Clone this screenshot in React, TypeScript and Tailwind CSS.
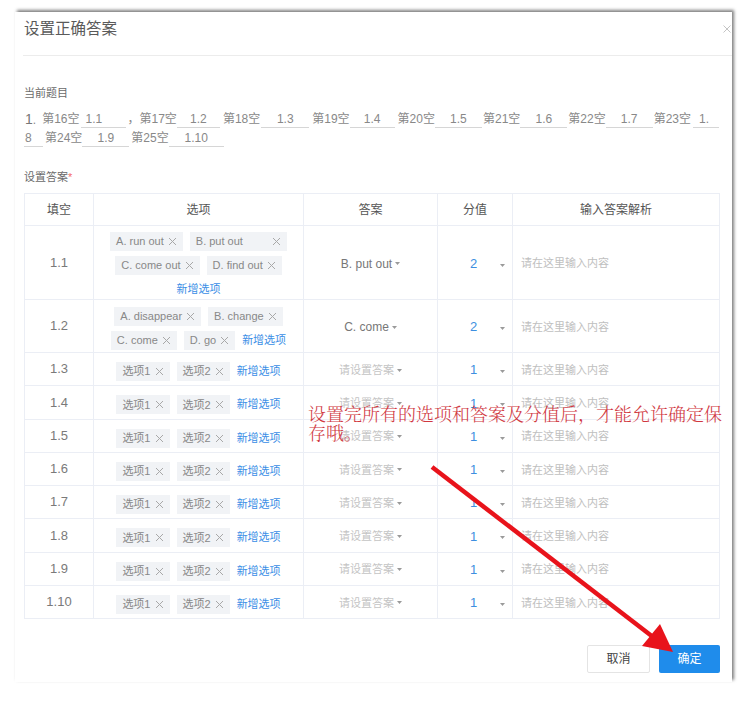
import React from "react";

function XIcon({ className }: { className?: string }) {
  return (
    <svg width="9" height="9" viewBox="0 0 9 9" className={className}>
      <path d="M1 1L8 8M8 1L1 8" stroke="#a8a8a8" strokeWidth="1" fill="none" />
    </svg>
  );
}

function Caret({ className }: { className?: string }) {
  return (
    <svg width="5" height="3" viewBox="0 0 5 3" className={className}>
      <path d="M0 0H5L2.5 3Z" fill="#9a9a9a" />
    </svg>
  );
}

function Tag({ label, wide }: { label: string; wide?: boolean }) {
  return (
    <span className="inline-flex items-center h-[19px] px-[6px] bg-[#f1f3f6] text-[11px] text-[#888] whitespace-nowrap">
      {label}
      <XIcon className={wide ? "ml-[29px]" : "ml-[4px]"} />
    </span>
  );
}

function AddBtn() {
  return <span className="h-[19px] leading-[19px] text-[11px] text-[#3a8ee6] whitespace-nowrap">新增选项</span>;
}

type Row = {
  n: string;
  h: string;
  tags: { label: string; wide?: boolean }[];
  answer: string;
  placeholder: boolean;
  score: string;
};

const rows: Row[] = [
  {
    n: "1.1",
    h: "h-[74px]",
    tags: [{ label: "A. run out" }, { label: "B. put out", wide: true }, { label: "C. come out" }, { label: "D. find out" }],
    answer: "B. put out",
    placeholder: false,
    score: "2",
  },
  {
    n: "1.2",
    h: "h-[53px]",
    tags: [{ label: "A. disappear" }, { label: "B. change" }, { label: "C. come" }, { label: "D. go" }],
    answer: "C. come",
    placeholder: false,
    score: "2",
  },
  ...["1.3", "1.4", "1.5", "1.6", "1.7", "1.8", "1.9", "1.10"].map((n) => ({
    n,
    h: "h-[33.25px]",
    tags: [{ label: "选项1" }, { label: "选项2" }],
    answer: "请设置答案",
    placeholder: true,
    score: "1",
  })),
];

function Label({ t, className }: { t: string; className?: string }) {
  return <span className={"whitespace-nowrap " + (className ?? "")}>{t}</span>;
}

function Blank({ t, className }: { t: string; className: string }) {
  return (
    <span className={"inline-block h-[17px] leading-[16px] border-b border-[#d6d6d6] whitespace-nowrap " + className}>{t}</span>
  );
}

export default function App() {
  return (
    <div className="relative w-[751px] h-[707px] bg-white overflow-hidden font-['Liberation_Sans','Noto_Sans_CJK_SC',sans-serif]">
      {/* dialog */}
      <div className="relative ml-[15px] mt-[12px] w-[717px] h-[670px] bg-white shadow-[2px_-2px_3px_rgba(0,0,0,0.5)] flex flex-col pl-[9px] pr-[12px]">
        <svg width="8" height="8" viewBox="0 0 8 8" className="absolute right-[1px] top-[13px]">
          <path d="M0.5 0.5L7.5 7.5M7.5 0.5L0.5 7.5" stroke="#c4c4c4" strokeWidth="1" />
        </svg>
        <div className="h-[44px] -ml-[1px] -mr-[12px] border-b border-[#ececec] pt-[6px] pl-[1px]">
          <div className="text-[15.5px] leading-[22px] text-[#5a5a5a]">设置正确答案</div>
        </div>

        <div className="mt-[29px] h-[17px] leading-[17px] text-[11px] text-[#6a6a6a]">当前题目</div>

        <div className="mt-[9px] text-[12px] text-[#888]">
          <div className="flex items-start h-[19px] leading-[16px] whitespace-nowrap">
            <span className="ml-[1px]">
              <span className="text-[14px] leading-[16px] text-[#777]">1</span>.
            </span>
            <Label t="第16空" className="ml-[6px]" />
            <Blank t="1.1" className="ml-[1px] w-[45px] pl-[5px]" />
            <span className="ml-[2px]">，</span>
            <Label t="第17空" />
            <Blank t="1.2" className="w-[43px] text-center" />
            <Label t="第18空" className="ml-[3px]" />
            <Blank t="1.3" className="ml-[1px] w-[48px] text-center" />
            <Label t="第19空" className="ml-[3px]" />
            <Blank t="1.4" className="w-[45px] text-center" />
            <Label t="第20空" className="ml-[3px]" />
            <Blank t="1.5" className="w-[47px] text-center" />
            <Label t="第21空" className="ml-[1px]" />
            <Blank t="1.6" className="w-[47px] text-center" />
            <Label t="第22空" className="ml-[1px]" />
            <Blank t="1.7" className="w-[47px] text-center" />
            <Label t="第23空" className="ml-[1px]" />
            <Blank t="1." className="ml-[2px] w-[26px] pl-[6px]" />
          </div>
          <div className="flex items-start h-[19px] leading-[16px] whitespace-nowrap">
            <Blank t="8" className="w-[19px] pl-[1px]" />
            <Label t="第24空" className="ml-[2px]" />
            <Blank t="1.9" className="w-[47px] text-center" />
            <Label t="第25空" className="ml-[2px]" />
            <Blank t="1.10" className="w-[55px] text-center" />
          </div>
        </div>

        <div className="mt-[20px] h-[17px] leading-[17px] text-[11px] text-[#6a6a6a]">
          设置答案<span className="text-[#f56c6c]">*</span>
        </div>

        {/* table */}
        <div className="mt-[7px] w-[696px] border border-[#ebeef5]">
          <div className="grid grid-cols-[69px_210px_134px_75px_206px] h-[31px] text-[12px] text-[#555]">
            <div className="flex items-center justify-center border-r border-[#ebeef5]">填空</div>
            <div className="flex items-center justify-center border-r border-[#ebeef5]">选项</div>
            <div className="flex items-center justify-center border-r border-[#ebeef5]">答案</div>
            <div className="flex items-center justify-center border-r border-[#ebeef5]">分值</div>
            <div className="flex items-center justify-center">输入答案解析</div>
          </div>
          {rows.map((r) => (
            <div key={r.n} className={"grid grid-cols-[69px_210px_134px_75px_206px] border-t border-[#ebeef5] " + r.h}>
              <div className="flex items-center justify-center border-r border-[#ebeef5] text-[13px] text-[#7a7a7a]">{r.n}</div>
              <div className="flex flex-wrap content-center items-center justify-center gap-x-[7px] gap-y-[5px] px-[8px] pt-[5px] border-r border-[#ebeef5]">
                {r.tags.map((t) => (
                  <Tag key={t.label} label={t.label} wide={t.wide} />
                ))}
                <AddBtn />
              </div>
              <div className="flex items-center justify-center pt-[2px] border-r border-[#ebeef5]">
                <span className={r.placeholder ? "text-[11px] text-[#c4c4c4]" : "text-[12px] text-[#777]"}>{r.answer}</span>
                <Caret className="ml-[3px]" />
              </div>
              <div className="relative flex items-center justify-center pt-[2px] pr-[3px] border-r border-[#ebeef5]">
                <span className="text-[13px] text-[#3d8fe0]">{r.score}</span>
                <Caret className="absolute right-[7px] top-1/2 mt-[1px]" />
              </div>
              <div className="flex items-center pl-[8px] pt-[2px] text-[11px] text-[#c0c0c0]">请在这里输入内容</div>
            </div>
          ))}
        </div>

        <div className="mt-[26px] flex justify-end gap-[9px]">
          <button className="w-[63px] h-[28px] border border-[#e4e4e4] bg-white text-[12px] text-[#444] rounded-[2px]">取消</button>
          <button className="w-[61px] h-[28px] bg-[#1f8ceb] text-[12px] text-white rounded-[2px]">确定</button>
        </div>
      </div>

      {/* annotation */}
      <div className="absolute left-[308px] top-[404px] text-[18px] leading-[19px] text-[#d0383f] whitespace-nowrap font-['Noto_Serif_CJK_SC','Liberation_Serif','Noto_Sans_CJK_SC',serif] font-light">
        设置完所有的选项和答案及分值后，才能允许确定保
        <br />
        存哦。
      </div>

      <svg width="751" height="707" className="absolute left-0 top-0 pointer-events-none">
        <line x1="432" y1="467" x2="653" y2="637" stroke="#e8131b" strokeWidth="4.5" />
        <polygon points="673,652 642,646 660,624" fill="#e8131b" />
      </svg>
    </div>
  );
}
